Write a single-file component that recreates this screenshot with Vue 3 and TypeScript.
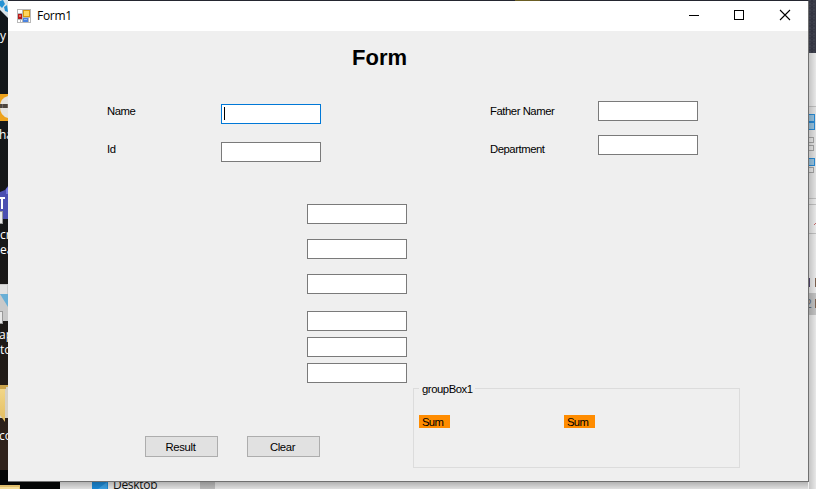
<script setup lang="ts">
import { ref } from 'vue'

interface Caption {
  text: string
  x: number
  y: number
}

const captions: Caption[] = [
  { text: 'y', x: 0, y: 40 },
  { text: 'ha', x: -1, y: 139 },
  { text: 'cr', x: 0, y: 239 },
  { text: 'ea', x: 0, y: 254 },
  { text: 'ap', x: -1, y: 339 },
  { text: 'to', x: 0, y: 354 },
  { text: 'co', x: -1, y: 440 },
]

const name = ref('')
const id = ref('')
const fatherName = ref('')
const department = ref('')
const marks = ref<string[]>(['', '', '', '', '', ''])

function clearForm(): void {
  name.value = ''
  id.value = ''
  fatherName.value = ''
  department.value = ''
  marks.value = marks.value.map(() => '')
}
</script>

<template>
  <div class="desktop">
    <svg class="backdrop" width="816" height="489" viewBox="0 0 816 489">
      <defs>
        <linearGradient id="wall" x1="0" y1="0" x2="0" y2="1">
          <stop offset="0" stop-color="#11171b" />
          <stop offset="0.55" stop-color="#171717" />
          <stop offset="0.8" stop-color="#211b17" />
          <stop offset="0.95" stop-color="#30231c" />
        </linearGradient>
        <linearGradient id="shadeDown" x1="0" y1="0" x2="0" y2="1">
          <stop offset="0" stop-color="#000" stop-opacity="0.25" />
          <stop offset="1" stop-color="#000" stop-opacity="0.06" />
        </linearGradient>
        <linearGradient id="shadeRight" x1="0" y1="0" x2="1" y2="0">
          <stop offset="0" stop-color="#000" stop-opacity="0.18" />
          <stop offset="1" stop-color="#000" stop-opacity="0.03" />
        </linearGradient>
        <linearGradient id="folder" x1="0" y1="0" x2="0" y2="1">
          <stop offset="0" stop-color="#f2d686" />
          <stop offset="1" stop-color="#e3bd61" />
        </linearGradient>
      </defs>
      <rect width="816" height="489" fill="#242630" />
      <rect x="515" width="25" height="1" fill="#6b5e24" />
      <rect width="8" height="470" fill="url(#wall)" />

      <path d="M0 0H8V18L0 10Z" fill="#d8e3e9" />
      <path d="M0 1L3 0L5 4L2 8L0 6ZM4 7L7 5L8 12L5 11Z" fill="#2492d4" />

      <rect y="94" width="8" height="27" fill="#eda21c" />
      <path d="M8 96Q0 98 0 107Q0 116 8 118Z" fill="#e5e3df" />
      <path d="M0 104H8V108H0Z" fill="#74675d" />
      <path d="M1 104V108M4 104V108M6 104V108" stroke="#252423" />

      <path d="M0 192L5 190L8 186V219H0Z" fill="#4b4fb1" />
      <path d="M6 189L8 187V194H6Z" fill="#7479dc" />
      <path d="M0 198H5M2 198V209" fill="none" stroke="#fff" stroke-width="2" />
      <rect x="-2" y="211.500" width="4.500" height="12" fill="#e9e9e9" stroke="#999" />

      <rect y="284" width="8" height="37" fill="#c9c9c9" />
      <rect y="285" width="7" height="9" fill="#e2e2e2" />
      <path d="M0 294H8V307Z" fill="#69afd6" />
      <rect x="-2" y="311.500" width="4.500" height="12" fill="#e9e9e9" stroke="#999" />

      <path d="M0 385H8V418H0Z" fill="#d6d1c5" />
      <path d="M0 385H8V387H6V389H0Z" fill="#cba44c" />
      <path d="M0 389H5V422L0 415Z" fill="url(#folder)" />

      <rect y="470" width="60" height="19" fill="#050606" />
      <rect y="485" width="20" height="4" fill="#dfbd6d" />
      <rect y="487" width="19" height="2" fill="#f5dc95" />
      <text v-for="caption in captions" :key="caption.y" class="caption" :x="caption.x" :y="caption.y">{{ caption.text }}</text>

      <rect x="60" y="481" width="756" height="8" fill="#eeeeee" />
      <rect x="92" y="481" width="16" height="8" fill="#1c8fdf" />
      <path d="M98 489L107 482V489Z" fill="#3da7ed" />
      <rect x="200" y="481" width="15" height="8" fill="#c4c4c4" />
      <text class="tree-label" x="113" y="489">Desktop</text>
      <rect x="60" y="482" width="756" height="7" fill="url(#shadeDown)" />

      <rect x="808" width="8" height="53" fill="#373945" />
      <path d="M810 0V53M814 0V53" stroke="#474a57" stroke-dasharray="1 2 2 1" />
      <path d="M812 0V53" stroke="#2d2f3c" stroke-dasharray="2 1 1 2" />
      <rect x="808" y="53" width="8" height="436" fill="#efefef" />
      <rect x="808" y="106" width="8" height="93" fill="#e8e8e8" />
      <path d="M808 106.500H816M808 198.500H816M808 204.500H816M808 233.500H816" stroke="#c4c4c4" />
      <g fill="#9ac7e5" stroke="#2a8dd8">
        <rect x="805.500" y="114.500" width="9" height="7" />
        <rect x="805.500" y="122.500" width="9" height="7" />
        <rect x="805.500" y="158.500" width="9" height="7" />
      </g>
      <g fill="#ececec" stroke="#a8a8a8">
        <rect x="805.500" y="137.500" width="8" height="5" />
        <rect x="805.500" y="145.500" width="8" height="5" />
        <rect x="805.500" y="167.500" width="8" height="5" />
      </g>
      <path d="M814 225L816 223" stroke="#c76c6c" />
      <rect x="808" y="293" width="8" height="22" fill="#c6c6c6" />
      <path d="M809.500 278V287" stroke="#574a72" />
      <path d="M815.500 278V287M815.500 299V308" stroke="#806451" />
      <text class="row-number" x="805" y="308">2</text>
      <rect x="809" y="53" width="7" height="436" fill="url(#shadeRight)" />
    </svg>

    <main class="window">
      <header class="titlebar">
        <svg class="app-icon" width="14" height="14" viewBox="0 0 14 14">
          <rect width="14" height="14" fill="#b8b8b8" />
          <path d="M1 1H5V4H1ZM1 11H3V13H1ZM4 11H5V13H4ZM12 9H13V13H12Z" fill="#fff" />
          <rect x="1" y="5" width="4" height="5" fill="#b51b1b" />
          <rect x="2" y="6" width="2" height="2" fill="#ed665b" />
          <rect x="6" y="1" width="7" height="7" fill="#d99a0c" />
          <rect x="7" y="2" width="5" height="5" fill="#ffd75b" />
          <rect x="6" y="9" width="5" height="4" fill="#4a83df" />
          <rect x="7" y="10" width="3" height="1" fill="#8db8fa" />
        </svg>
        <span class="window-title">Form1</span>
        <div class="controls">
          <svg width="46" height="30" viewBox="0 0 46 30"><path d="M18 14.500H28" stroke="#000" /></svg>
          <svg width="46" height="30" viewBox="0 0 46 30"><rect x="17.500" y="9.500" width="9" height="9" fill="none" stroke="#000" /></svg>
          <svg width="46" height="30" viewBox="0 0 46 30"><path d="M17 9L27 19M27 9L17 19" stroke="#000" stroke-width="1.100" /></svg>
        </div>
      </header>

      <form class="client" @submit.prevent>
        <h1>Form</h1>
        <section class="details">
          <div class="labels">
            <label for="name">Name</label>
            <label for="id">Id</label>
          </div>
          <div class="inputs left-inputs">
            <div class="focused-field"><i class="caret"></i><input id="name" v-model="name" class="active" /></div>
            <input id="id" v-model="id" />
          </div>
          <div class="labels right-labels">
            <label for="father">Father Namer</label>
            <label for="department">Department</label>
          </div>
          <div class="inputs right-inputs">
            <input id="father" v-model="fatherName" />
            <input id="department" v-model="department" />
          </div>
        </section>

        <section class="marks">
          <input v-for="(_, index) in marks" :key="index" v-model="marks[index]" />
        </section>

        <section class="bottom">
          <div class="actions">
            <button type="button">Result</button>
            <button type="button" @click="clearForm">Clear</button>
          </div>
          <fieldset>
            <legend>groupBox1</legend>
            <div class="sums">
              <span>Sum</span>
              <span>Sum</span>
            </div>
          </fieldset>
        </section>
      </form>
    </main>
  </div>
</template>

<style>
body {
  margin: 0;
  overflow: hidden;
}
</style>

<style scoped>
* {
  box-sizing: border-box;
}
.desktop {
  position: relative;
  width: 816px;
  height: 489px;
  overflow: hidden;
  font-family: "Liberation Sans", Arial, sans-serif;
  font-size: 11.3px;
  color: #000;
}
.backdrop {
  display: block;
}
.caption {
  font: 12px "Open Sans", sans-serif;
  fill: #fff;
}
.tree-label {
  font: 12px "Open Sans", sans-serif;
  letter-spacing: -0.3px;
  fill: #111;
}
.row-number {
  font: 12px "Open Sans", sans-serif;
  fill: #66717c;
}
.window {
  position: absolute;
  left: 8px;
  top: 1px;
  width: 801px;
  height: 481px;
  border-right: 1px solid #707070;
  border-bottom: 1px solid #707070;
  background: #efefef;
}
.titlebar {
  display: flex;
  align-items: center;
  height: 30px;
  padding-left: 9px;
  background: #fff;
}
.app-icon {
  flex: none;
}
.window-title {
  margin-left: 6px;
  font: 12px/30px "Open Sans", sans-serif;
  letter-spacing: -0.3px;
}
.controls {
  display: flex;
  margin-left: auto;
  margin-right: -1px;
}
.client {
  display: flex;
  flex-direction: column;
  height: 450px;
}
h1 {
  margin: 13px 0 0 344px;
  height: 27px;
  font: bold 22px/27px "Liberation Sans", sans-serif;
}
.details {
  display: flex;
  height: 133px;
  padding: 30px 0 0 99px;
}
.labels {
  display: flex;
  flex-direction: column;
  gap: 24px;
  width: 114px;
  padding-top: 3px;
  line-height: 14px;
  letter-spacing: -0.45px;
}
label {
  height: 14px;
  white-space: nowrap;
}
.right-labels {
  width: 108px;
  margin-left: 169px;
}
.inputs {
  display: flex;
  flex-direction: column;
  width: 100px;
}
.left-inputs {
  gap: 18px;
  padding-top: 3px;
}
.right-inputs {
  gap: 14px;
}
input {
  display: block;
  width: 100px;
  height: 20px;
  margin: 0;
  padding: 1px 3px;
  border: 1px solid #7a7a7a;
  border-radius: 0;
  background: #fff;
  outline: none;
  font: inherit;
}
.active {
  border-color: #0078d7;
}
.focused-field {
  position: relative;
}
.caret {
  position: absolute;
  left: 3px;
  top: 3px;
  width: 1px;
  height: 13px;
  background: #000;
}
.marks {
  display: flex;
  flex-direction: column;
  gap: 6px;
  height: 178px;
  padding-left: 299px;
}
.marks input {
  flex: none;
}
.marks input:nth-child(-n + 2) {
  margin-bottom: 9px;
}
.marks input:nth-child(3) {
  margin-bottom: 11px;
}
.bottom {
  display: flex;
  height: 99px;
}
.actions {
  display: flex;
  gap: 29px;
  width: 405px;
  padding: 54px 0 0 137px;
}
button {
  width: 73px;
  height: 21px;
  padding: 0 2px 0 0;
  border: 1px solid #adadad;
  border-radius: 0;
  background: #e1e1e1;
  color: #000;
  font: inherit;
  letter-spacing: -0.35px;
}
fieldset {
  width: 327px;
  min-width: 0;
  height: 86px;
  margin: 0;
  padding: 0 0 0 5px;
  border: 1px solid #dcdcdc;
}
legend {
  height: 12px;
  padding: 0 2px 0 3px;
  line-height: 14px;
  letter-spacing: -0.45px;
}
.sums {
  display: flex;
  gap: 114px;
  padding-top: 21px;
}
.sums span {
  width: 31px;
  height: 13px;
  padding-left: 3px;
  background: #ff8c00;
  line-height: 14px;
  letter-spacing: -0.7px;
}
</style>
